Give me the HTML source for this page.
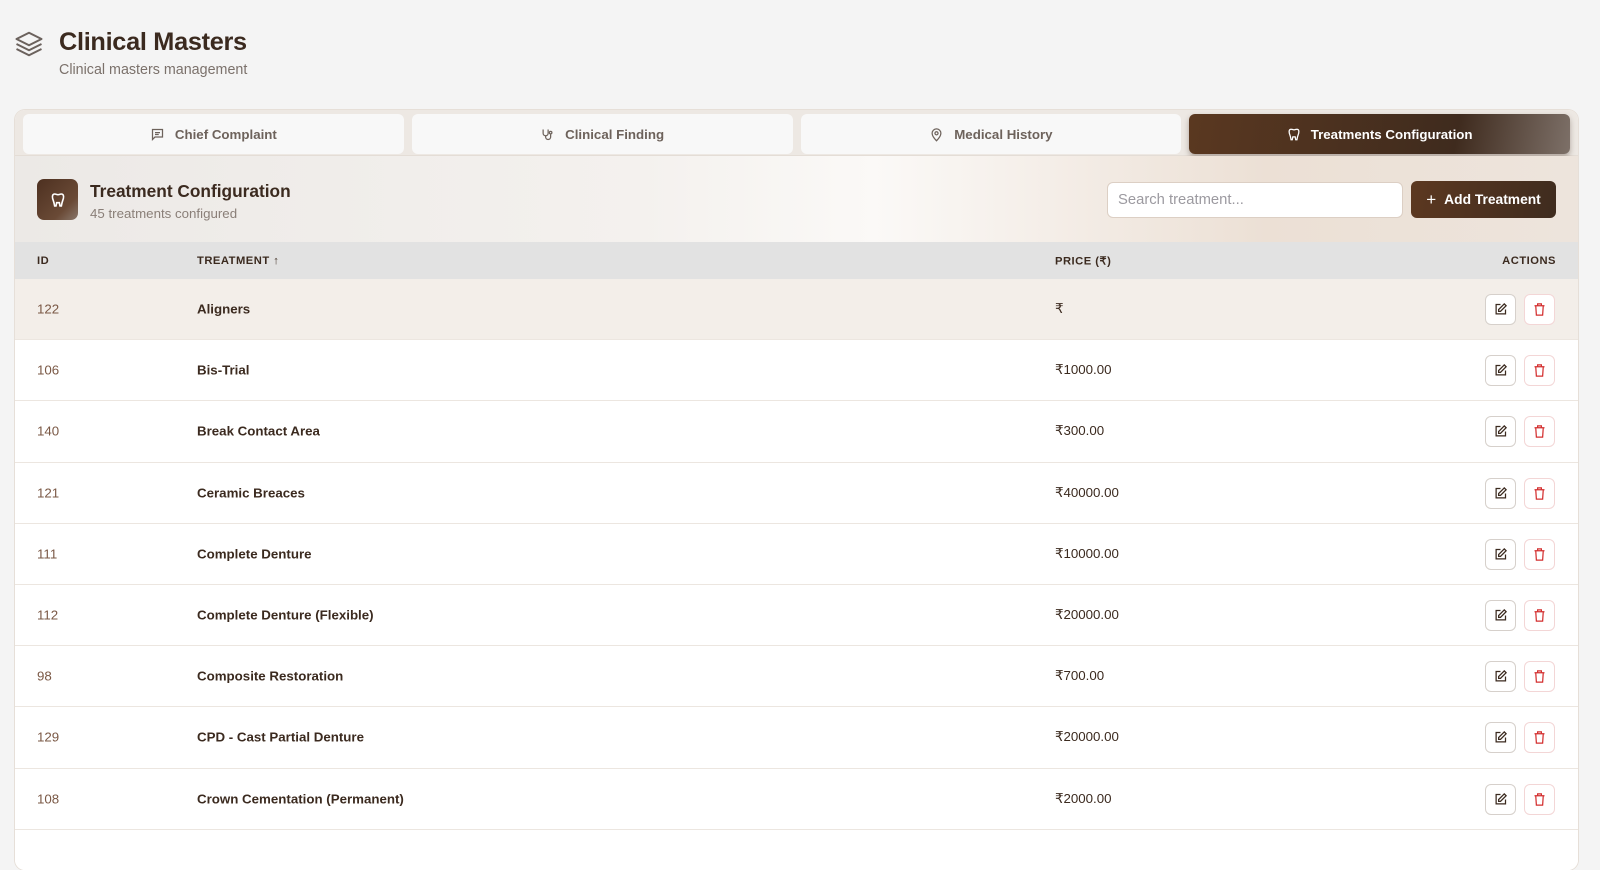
<!DOCTYPE html>
<html><head><meta charset="utf-8"><style>
*{box-sizing:border-box;margin:0;padding:0}
body{width:1600px;height:841px;overflow:hidden;background:#f4f4f4;font-family:"Liberation Sans",sans-serif;color:#3d2b1f}
.top{position:absolute;left:14px;top:29px}
.title{position:absolute;left:59px;top:28px;font-size:25.3px;font-weight:bold;color:#3b2a1f;letter-spacing:-0.3px}
.sub{position:absolute;left:59px;top:62px;font-size:14.3px;color:#7b716b}
.card{position:absolute;left:15px;top:110px;width:1563px;height:760px;background:#fff;border-radius:10px;overflow:hidden;box-shadow:0 0 0 1px #e6dfd8}
.tabs{height:46px;background:#ede8e3;padding:4px 8px 1px;display:flex;gap:8px;border-bottom:1px solid #e4ddd6}
.tab{flex:1;background:#f8f8f8;border-radius:6px;display:flex;align-items:center;justify-content:center;font-size:13.3px;font-weight:bold;color:#6d625b;gap:10px}
.tab.act{background:linear-gradient(100deg,#5a3820,#3f2b1e 70%,#7d7068);color:#fff;box-shadow:0 3px 6px rgba(60,40,25,.35)}
.hdr{height:86px;background:linear-gradient(90deg,#ece9e6,#f4f1ee 40%,#fbf9f7 55%,#ece0d5 80%,#ede4dc);position:relative}
.ico{position:absolute;left:22px;top:23px;width:41px;height:41px;border-radius:7px;background:linear-gradient(135deg,#4d3020,#6a4a36 70%,#8a786c);display:flex;align-items:center;justify-content:center}
.h1{position:absolute;left:75px;top:25px;font-size:17.3px;font-weight:bold;color:#3b2a1f}
.h2{position:absolute;left:75px;top:50px;font-size:13.3px;color:#8a7f78}
.search{position:absolute;left:1092px;top:26px;width:296px;height:36px;background:#fff;border:1px solid #dccfc4;border-radius:6px;font-size:14.8px;color:#9c9aa0;padding:9px 10px}
.add{position:absolute;left:1396px;top:25px;width:145px;height:37px;border-radius:6px;background:linear-gradient(100deg,#5c3820,#3f2c1f);color:#fff;font-size:13.8px;font-weight:bold;display:flex;align-items:center;justify-content:center;gap:8px}
.th{height:37px;background:#e2e2e2;position:relative;font-size:11.2px;font-weight:bold;letter-spacing:.5px;color:#3b2a1f}
.th span,.row span{position:absolute;top:50%;transform:translateY(-50%)}
.row{height:61.2px;border-bottom:1px solid #ece6e0;position:relative;font-size:13.3px;background:#fff}
.row.h{background:#f3eee9}
.id{left:22px;color:#7a5845}
.nm{left:182px;font-weight:bold;color:#3b2a1f}
.pr{left:1040px;color:#3b2a1f}
.b{position:absolute;top:15px;width:31px;height:31px;border-radius:6px;background:#fff;display:flex;align-items:center;justify-content:center}
.e{left:1470px;border:1px solid #d6d0cb}
.d{left:1509px;border:1px solid #f3d6d6}
</style></head><body>
<svg class="top" width="30" height="30" viewBox="0 0 24 24" fill="none" stroke="#6b625d" stroke-width="1.6" stroke-linejoin="round"><path d="M12 3 2 8l10 5 10-5z"/><path d="M2 12l10 5 10-5"/><path d="M2 16l10 5 10-5"/></svg>
<div class="title">Clinical Masters</div>
<div class="sub">Clinical masters management</div>
<div class="card">
<div class="tabs">
<div class="tab"><svg width="15" height="15" viewBox="0 0 24 24" fill="none" stroke="#6d625b" stroke-width="2"><path d="M4 4h16v12H8l-4 4z"/><path d="M8 9h8M8 12h6"/></svg>Chief Complaint</div>
<div class="tab"><svg width="15" height="15" viewBox="0 0 24 24" fill="none" stroke="#6d625b" stroke-width="2"><path d="M5 4v6a4 4 0 0 0 8 0V4M9 14v2a4 4 0 0 0 8 0v-4"/><circle cx="17" cy="9" r="2"/></svg>Clinical Finding</div>
<div class="tab"><svg width="15" height="15" viewBox="0 0 24 24" fill="none" stroke="#6d625b" stroke-width="2"><path d="M12 22s7-7 7-12a7 7 0 0 0-14 0c0 5 7 12 7 12z"/><circle cx="12" cy="10" r="2.5"/></svg>Medical History</div>
<div class="tab act"><svg width="14" height="15" viewBox="0 0 24 24" fill="none" stroke="#fff" stroke-width="2.2"><path d="M7 3c-3 0-4 3-3 7 1 3 2 5 3 11h2l1-5h4l1 5h2c1-6 2-8 3-11 1-4 0-7-3-7-2 0-3 1-5 1S9 3 7 3z"/></svg>Treatments Configuration</div>
</div>
<div class="hdr">
<div class="ico"><svg width="16" height="18" viewBox="0 0 24 24" fill="none" stroke="#fff" stroke-width="2.4"><path d="M7 3c-3 0-4 3-3 7 1 3 2 5 3 11h2l1-5h4l1 5h2c1-6 2-8 3-11 1-4 0-7-3-7-2 0-3 1-5 1S9 3 7 3z"/></svg></div>
<div class="h1">Treatment Configuration</div>
<div class="h2">45 treatments configured</div>
<div class="search">Search treatment...</div>
<div class="add"><span style="font-size:17px;font-weight:normal">+</span>Add Treatment</div>
</div>
<div class="th"><span style="left:22px">ID</span><span style="left:182px">TREATMENT ↑</span><span style="left:1040px">PRICE (₹)</span><span style="right:22px">ACTIONS</span></div>
<div class="row h"><span class="id">122</span><span class="nm">Aligners</span><span class="pr">₹</span><div class="b e"><svg width="15" height="15" viewBox="0 0 24 24" fill="none" stroke="#3b2a1f" stroke-width="2"><path d="M12 4H5v15h15v-7"/><path d="M18 3l3 3-9 9H9v-3z"/></svg></div><div class="b d"><svg width="15" height="15" viewBox="0 0 24 24" fill="none" stroke="#d32f2f" stroke-width="2"><path d="M4 6h16M9 6V3h6v3M6 6l1 15h10l1-15"/></svg></div></div>
<div class="row"><span class="id">106</span><span class="nm">Bis-Trial</span><span class="pr">₹1000.00</span><div class="b e"><svg width="15" height="15" viewBox="0 0 24 24" fill="none" stroke="#3b2a1f" stroke-width="2"><path d="M12 4H5v15h15v-7"/><path d="M18 3l3 3-9 9H9v-3z"/></svg></div><div class="b d"><svg width="15" height="15" viewBox="0 0 24 24" fill="none" stroke="#d32f2f" stroke-width="2"><path d="M4 6h16M9 6V3h6v3M6 6l1 15h10l1-15"/></svg></div></div>
<div class="row"><span class="id">140</span><span class="nm">Break Contact Area</span><span class="pr">₹300.00</span><div class="b e"><svg width="15" height="15" viewBox="0 0 24 24" fill="none" stroke="#3b2a1f" stroke-width="2"><path d="M12 4H5v15h15v-7"/><path d="M18 3l3 3-9 9H9v-3z"/></svg></div><div class="b d"><svg width="15" height="15" viewBox="0 0 24 24" fill="none" stroke="#d32f2f" stroke-width="2"><path d="M4 6h16M9 6V3h6v3M6 6l1 15h10l1-15"/></svg></div></div>
<div class="row"><span class="id">121</span><span class="nm">Ceramic Breaces</span><span class="pr">₹40000.00</span><div class="b e"><svg width="15" height="15" viewBox="0 0 24 24" fill="none" stroke="#3b2a1f" stroke-width="2"><path d="M12 4H5v15h15v-7"/><path d="M18 3l3 3-9 9H9v-3z"/></svg></div><div class="b d"><svg width="15" height="15" viewBox="0 0 24 24" fill="none" stroke="#d32f2f" stroke-width="2"><path d="M4 6h16M9 6V3h6v3M6 6l1 15h10l1-15"/></svg></div></div>
<div class="row"><span class="id">111</span><span class="nm">Complete Denture</span><span class="pr">₹10000.00</span><div class="b e"><svg width="15" height="15" viewBox="0 0 24 24" fill="none" stroke="#3b2a1f" stroke-width="2"><path d="M12 4H5v15h15v-7"/><path d="M18 3l3 3-9 9H9v-3z"/></svg></div><div class="b d"><svg width="15" height="15" viewBox="0 0 24 24" fill="none" stroke="#d32f2f" stroke-width="2"><path d="M4 6h16M9 6V3h6v3M6 6l1 15h10l1-15"/></svg></div></div>
<div class="row"><span class="id">112</span><span class="nm">Complete Denture (Flexible)</span><span class="pr">₹20000.00</span><div class="b e"><svg width="15" height="15" viewBox="0 0 24 24" fill="none" stroke="#3b2a1f" stroke-width="2"><path d="M12 4H5v15h15v-7"/><path d="M18 3l3 3-9 9H9v-3z"/></svg></div><div class="b d"><svg width="15" height="15" viewBox="0 0 24 24" fill="none" stroke="#d32f2f" stroke-width="2"><path d="M4 6h16M9 6V3h6v3M6 6l1 15h10l1-15"/></svg></div></div>
<div class="row"><span class="id">98</span><span class="nm">Composite Restoration</span><span class="pr">₹700.00</span><div class="b e"><svg width="15" height="15" viewBox="0 0 24 24" fill="none" stroke="#3b2a1f" stroke-width="2"><path d="M12 4H5v15h15v-7"/><path d="M18 3l3 3-9 9H9v-3z"/></svg></div><div class="b d"><svg width="15" height="15" viewBox="0 0 24 24" fill="none" stroke="#d32f2f" stroke-width="2"><path d="M4 6h16M9 6V3h6v3M6 6l1 15h10l1-15"/></svg></div></div>
<div class="row"><span class="id">129</span><span class="nm">CPD - Cast Partial Denture</span><span class="pr">₹20000.00</span><div class="b e"><svg width="15" height="15" viewBox="0 0 24 24" fill="none" stroke="#3b2a1f" stroke-width="2"><path d="M12 4H5v15h15v-7"/><path d="M18 3l3 3-9 9H9v-3z"/></svg></div><div class="b d"><svg width="15" height="15" viewBox="0 0 24 24" fill="none" stroke="#d32f2f" stroke-width="2"><path d="M4 6h16M9 6V3h6v3M6 6l1 15h10l1-15"/></svg></div></div>
<div class="row"><span class="id">108</span><span class="nm">Crown Cementation (Permanent)</span><span class="pr">₹2000.00</span><div class="b e"><svg width="15" height="15" viewBox="0 0 24 24" fill="none" stroke="#3b2a1f" stroke-width="2"><path d="M12 4H5v15h15v-7"/><path d="M18 3l3 3-9 9H9v-3z"/></svg></div><div class="b d"><svg width="15" height="15" viewBox="0 0 24 24" fill="none" stroke="#d32f2f" stroke-width="2"><path d="M4 6h16M9 6V3h6v3M6 6l1 15h10l1-15"/></svg></div></div>
<div class="row"></div>
</div>
</body></html>
